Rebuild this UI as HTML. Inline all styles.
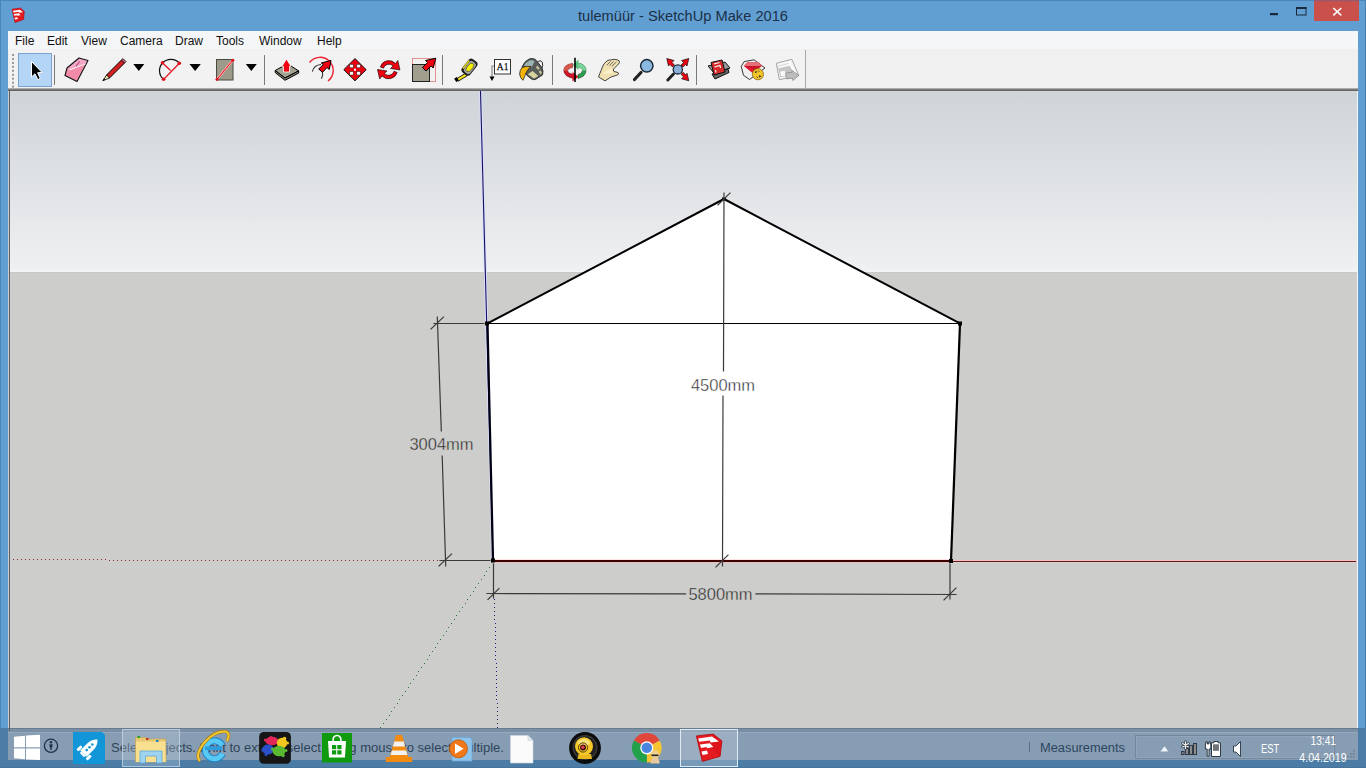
<!DOCTYPE html>
<html><head><meta charset="utf-8">
<style>
*{margin:0;padding:0;box-sizing:border-box}
html,body{width:1366px;height:768px;overflow:hidden}
body{position:relative;background:#619fd2;font-family:"Liberation Sans",sans-serif}
.abs{position:absolute}
#topline{left:0;top:0;width:1366px;height:1px;background:#4a86bd}
#rightline{left:1365px;top:0;width:1px;height:768px;background:#4a80b0}
#leftline{left:0;top:0;width:1px;height:768px;background:#4a86bd}
#title{left:0;top:8px;width:1366px;text-align:center;font-size:14.65px;color:#1c3048;line-height:17px;padding-left:0}
#close{left:1314px;top:0;width:45px;height:21px;background:#c9504b}
#menubar{left:8px;top:31px;width:1350px;height:18px;background:#f5f6f7}
.mi{position:absolute;top:3px;font-size:12px;color:#111;line-height:14px}
#toolbar{left:8px;top:49px;width:1350px;height:39px;background:#f0f0f0}
#tbsep{left:8px;top:88px;width:1350px;height:3px;background:linear-gradient(#adadad 0,#adadad 1px,#7c7c7c 1px,#7c7c7c 2px,#646464 2px)}
#vp{left:8px;top:91px;width:1350px;height:637px;background:linear-gradient(90deg,#c8ccd0 0,#c8ccd0 1px,#5f5f5f 1px,#5f5f5f 2px,transparent 2px,transparent 1348px,#f4f6f8 1348px)}
#vpin{left:10px;top:91px;width:1347px;height:637px}
#sky{left:10px;top:91px;width:1347px;height:181px;background:linear-gradient(#d5d8db 0,#cfd4d8 2px,#eff0f2 178px,#f4f5f5 181px)}
#ground{left:10px;top:272px;width:1347px;height:456px;background:linear-gradient(#c8c8c6 0,#c8c8c6 1px,#cdcdcb 1px)}
#taskbar{left:0;top:728px;width:1366px;height:40px;background:#879db3}
</style></head><body>
<div class="abs" id="topline"></div>
<div class="abs" id="leftline"></div>
<div class="abs" id="rightline"></div>
<div class="abs" id="title">tulemüür - SketchUp Make 2016</div>
<div class="abs" id="close"></div>
<svg class="abs" style="left:0;top:0" width="1366" height="31" viewBox="0 0 1366 31">
 <!-- app icon -->
 <path d="M12 9.2 L20.5 8 L24.3 11.5 L23.6 19.5 L15 22.5 Z" fill="#e41c20" stroke="#b00810" stroke-width="0.6" stroke-linejoin="round"/>
 <g fill="#fff">
  <path d="M13 10.8 L20 9.8 L23 12.3 L19 12.8 L18.5 11.8 L13.5 12.5 Z"/>
  <path d="M13.8 14 L18.8 13.3 L20.5 15.2 L17.3 15.8 L17 15.2 L14.3 15.8 Z"/>
  <path d="M14.6 17.8 L17.3 17.3 L17.8 19 L15 19.5 Z"/>
 </g>
 <!-- min / max / close -->
 <rect x="1314" y="0" width="45" height="1" fill="#9a5868"/><rect x="1314" y="1" width="45" height="1" fill="#b85458"/>
 <rect x="1270" y="13" width="8" height="2.2" fill="#1a2a3c"/>
 <rect x="1296.5" y="7.5" width="9.5" height="7.5" fill="none" stroke="#1a2a3c" stroke-width="1"/>
 <rect x="1296" y="7" width="10.5" height="2" fill="#1a2a3c"/>
 <path d="M1333.3 8 L1341.3 15.3 M1341.3 8 L1333.3 15.3" stroke="#fff" stroke-width="1.6"/>
</svg>
<div class="abs" id="menubar">
 <span class="mi" style="left:7px">File</span>
 <span class="mi" style="left:39px">Edit</span>
 <span class="mi" style="left:73px">View</span>
 <span class="mi" style="left:112px">Camera</span>
 <span class="mi" style="left:167px">Draw</span>
 <span class="mi" style="left:208px">Tools</span>
 <span class="mi" style="left:251px">Window</span>
 <span class="mi" style="left:309px">Help</span>
</div>
<div class="abs" id="toolbar"></div>
<svg class="abs" style="left:0;top:0" width="830" height="92" viewBox="0 0 830 92">
 <!-- toolbar band -->
 <rect x="9" y="50" width="796" height="38" fill="#f2f2f2"/>
 <line x1="805.5" y1="50" x2="805.5" y2="88" stroke="#a8a8a8"/>
 <!-- gripper -->
 <g fill="#9a9a9a"><rect x="12" y="54.0" width="2" height="2"/><rect x="12" y="58.0" width="2" height="2"/><rect x="12" y="61.9" width="2" height="2"/><rect x="12" y="65.8" width="2" height="2"/><rect x="12" y="69.8" width="2" height="2"/><rect x="12" y="73.8" width="2" height="2"/><rect x="12" y="77.7" width="2" height="2"/><rect x="12" y="81.7" width="2" height="2"/><rect x="12" y="85.6" width="2" height="2"/></g>
 <!-- select button -->
 <rect x="18.5" y="53.5" width="33" height="33" fill="#b5d5f7" stroke="#7ba3d2"/>
 <path d="M31.5 61.5 L31.5 77 L35 73.8 L37.8 79.6 L40.3 78.4 L37.6 72.8 L42 72.4 Z" fill="#000" stroke="#fff" stroke-width="1"/>
 <!-- separators -->
 <g stroke="#7a7a7a" stroke-width="1">
  <line x1="54.5" y1="55" x2="54.5" y2="85"/>
  <line x1="264.5" y1="55" x2="264.5" y2="85"/>
  <line x1="442.5" y1="55" x2="442.5" y2="85"/>
  <line x1="552.5" y1="55" x2="552.5" y2="85"/>
  <line x1="696.5" y1="55" x2="696.5" y2="85"/>
 </g>
 <!-- eraser -->
 <path d="M67 68 L79 58 L88 60.5 L85.5 64 L69.5 70 Z" fill="#f4a8c8"/>
 <path d="M65 75.5 L67 68 L69.5 70 L85.5 64 L77 81.5 Z" fill="#f28aa8"/>
 <path d="M79 58 L88 60.5 L77 81.5 L65 75.5 L67 68 Z" fill="none" stroke="#111" stroke-width="1.1" stroke-linejoin="round"/>
 <line x1="69.5" y1="70" x2="85.5" y2="64" stroke="#fff" stroke-width="0.9" opacity="0.9"/>
 <path d="M79.5 61.5 L76 66.5" stroke="#a03060" stroke-width="1.2" stroke-dasharray="1,0.6"/>
 <!-- pencil -->
 <g stroke-linejoin="round">
  <path d="M106.5 75 L121.5 60 L124.6 63 L109.5 78 Z" fill="#d42020" stroke="#000" stroke-width="1"/>
  <path d="M106.5 75 L109.5 78 L102.8 80.8 Z" fill="#f0e6a8" stroke="#000" stroke-width="0.8"/>
  <path d="M102.8 80.8 L104 78.3 L105.3 79.5 Z" fill="#000"/>
  <path d="M121.5 60 L123 58.6 L126 61.6 L124.6 63 Z" fill="#e07090" stroke="#000" stroke-width="0.8"/>
 </g>
 <!-- dropdown triangles -->
 <g fill="#000">
  <path d="M133.3 64 L144.3 64 L138.8 71 Z"/>
  <path d="M189.5 64 L200.8 64 L195.1 71 Z"/>
  <path d="M245.8 64 L256.8 64 L251.3 71 Z"/>
 </g>
 <!-- arc -->
 <path d="M163.6 79.4 A11.35 11.35 0 1 1 179.4 63.2" fill="none" stroke="#111" stroke-width="1.2"/>
 <g stroke="#e0101c" stroke-width="1.3"><line x1="163.6" y1="79.4" x2="179.4" y2="63.2"/><line x1="162.3" y1="62.7" x2="170.6" y2="70.5"/></g>
 <g fill="#e0101c"><circle cx="162.5" cy="62.8" r="1.8"/><circle cx="179.3" cy="63.2" r="1.8"/><circle cx="163.6" cy="79.3" r="1.8"/></g>
 <!-- rectangle -->
 <rect x="216.5" y="59.5" width="16.5" height="20.5" fill="#9c9a88" stroke="#4a4a40" stroke-width="1"/>
 <line x1="216.8" y1="79.6" x2="233" y2="60" stroke="#ffb0b0" stroke-width="2.4"/>
 <line x1="216.8" y1="79.6" x2="233" y2="60" stroke="#e0101c" stroke-width="1"/>
 <circle cx="217" cy="79.3" r="1.5" fill="#e0101c"/><circle cx="232.8" cy="60.2" r="1.5" fill="#e0101c"/>
 <!-- push pull -->
 <g stroke="#000" stroke-width="1" stroke-linejoin="round">
  <path d="M275.2 70.5 L287.5 63.8 L298.7 70.9 L285 78 Z" fill="#a4a292"/>
  <path d="M275.2 70.5 L285 78 L298.7 70.9 L298.7 73 L285 80.3 L275.2 72.6 Z" fill="#7e7c6e"/>
 </g>
 <path d="M286.4 59 L291 66.3 L289.5 66.3 L289.5 72 L283.5 72 L283.5 66.3 L282 66.3 Z" fill="#f00010" stroke="#fff" stroke-width="0.8"/>
 <!-- follow me -->
 <path d="M309.5 62.5 A13.2 13.2 0 1 1 328 81" fill="none" stroke="#f02030" stroke-width="1.4"/>
 <path d="M312.3 71.7 A9.5 9.5 0 0 1 321 64.5 M322 70.5 A9.5 9.5 0 0 1 321.3 78.6" fill="none" stroke="#333" stroke-width="1.1"/>
 <path d="M331 60.4 L329.3 69.5 L327 67.5 L322.5 72.3 L318.7 69 L323.3 64.5 L321.3 63 Z" fill="#f00010" stroke="#000" stroke-width="1" stroke-linejoin="round"/>
 <!-- move -->
 <path d="M355 58.6 L366.2 69.7 L355 80.8 L343.8 69.7 Z" fill="#ee0010" stroke="#111" stroke-width="1" stroke-linejoin="round"/>
 <g fill="#fff" stroke="#222" stroke-width="0.5">
  <rect x="349.8" y="64.4" width="3.4" height="3.4"/><rect x="356.8" y="64.4" width="3.4" height="3.4"/>
  <rect x="349.8" y="71.6" width="3.4" height="3.4"/><rect x="356.8" y="71.6" width="3.4" height="3.4"/>
 </g>
 <rect x="354" y="68.7" width="2" height="2" fill="#fff"/>
 <!-- rotate -->
 <g fill="#ee0010" stroke="#000" stroke-width="0.6" stroke-linejoin="round">
  <path d="M380.3 67 A9 9 0 0 1 395.5 63.5 L397.8 60.5 L400 70 L390.5 68.5 L393 66 A5.6 5.6 0 0 0 383.6 68.2 Z"/>
  <path d="M397.2 72.4 A9 9 0 0 1 382 76 L379.7 79 L377.5 69.5 L387 71 L384.5 73.5 A5.6 5.6 0 0 0 393.9 71.3 Z"/>
 </g>
 <!-- scale -->
 <rect x="412.5" y="58.5" width="23" height="23" fill="none" stroke="#e89090" stroke-width="1"/>
 <rect x="412.5" y="64.5" width="17" height="17" fill="#a09e8c" stroke="#222" stroke-width="1"/>
 <path d="M435.8 58.2 L433.2 68 L431.2 66 L426 71 L422.4 67.5 L427.6 62.5 L425.5 60.5 Z" fill="#f00010" stroke="#000" stroke-width="1" stroke-linejoin="round"/>
 <!-- tape measure -->
 <path d="M456.5 78.8 L465.5 73.3 L467.2 75.8 L458.2 81.2 Z" fill="#f0e020" stroke="#111" stroke-width="0.9"/>
 <rect x="455" y="77.6" width="3" height="4" fill="#000" transform="rotate(-32 456.5 79.6)"/>
 <g transform="rotate(38 469.3 67)">
  <rect x="464.3" y="58.5" width="10.5" height="17" rx="3.5" fill="#1a1a1a"/>
  <rect x="466.3" y="60.3" width="7.5" height="13.5" rx="2.5" fill="#a8a8a8"/>
  <rect x="464.5" y="62" width="1.6" height="10" fill="#e0d020"/>
  <ellipse cx="470" cy="67" rx="2.6" ry="5" fill="#f4f000" stroke="#222" stroke-width="0.5"/>
 </g>
 <!-- text tool -->
 <rect x="494.5" y="59.5" width="16" height="14.5" fill="#fff" stroke="#333" stroke-width="1"/>
 <text x="502.6" y="70.3" font-family="Liberation Serif" font-size="9.5" text-anchor="middle" fill="#111" stroke="#111" stroke-width="0.25">A1</text>
 <path d="M494 66 L492 66 L492 77" fill="none" stroke="#8a8a8a" stroke-width="1.2"/>
 <path d="M489.5 76.5 L494.5 76.5 L492 81 Z" fill="#000"/>
 <!-- paint bucket -->
 <path d="M537 62.5 Q540.5 59.3 542.3 62.3 Q543.5 65.5 541.5 69" fill="none" stroke="#222" stroke-width="1"/>
 <path d="M522 67 Q524 61.5 529.5 58.8 Q533 58 535.5 59.5 L541.5 67 Q544 71 542.5 75 L535.5 79.5 Q533.5 80 531.5 79 L527 75.5 Z" fill="#585c5a" stroke="#2a2e2c" stroke-width="0.9" stroke-linejoin="round"/>
 <path d="M524 66 Q526 62 530 60.3 Q533.5 59.8 534.5 61.5 L532 66.5 Q527.5 66.8 524 66 Z" fill="#9cb4b4"/>
 <path d="M527.8 74.3 L532.6 71 L538.3 76 L534 78.5 Z" fill="#d8d4a2"/>
 <path d="M537 65.5 L539.8 68.3 L538.3 70 L536 67.5 Z M540 70 L542 72.5 L540.8 74.5 L538.8 72 Z" fill="#c8c496"/>
 <path d="M522 67.5 Q527 65.8 531 66.5 Q527.5 69 526 73 Q524.5 77 523 80.3 Q520 78 519.6 74 Q519.8 70 522 67.5 Z" fill="#f4b408" stroke="#222" stroke-width="0.8" stroke-linejoin="round"/>
 <!-- orbit -->
 <path d="M572.5 63.5 Q563.8 64.5 563.8 70.5 Q564 76.5 573.5 78.5 L573.5 74.5 Q567.8 73.5 567.5 70.8 Q568 67.8 572.5 67.5 Z" fill="#d41424" stroke="#3a1010" stroke-width="0.5"/>
 <path d="M572.5 63.5 Q563.8 64.5 563.8 70.5 L567.5 70.8 Q568 67.8 572.5 67.5 Z" fill="#d8584c"/>
 <path d="M572.5 72 L578.5 76.8 L572.5 81.5 Z" fill="#d41424"/>
 <path d="M577.5 63 Q586 64 586 70.5 Q586 76.5 578 78.5 L578 74.5 Q582.3 73.5 582.5 70.5 Q582.3 67.5 577.5 67 Z" fill="#2e9e4e" stroke="#103a1a" stroke-width="0.5"/>
 <path d="M577.5 63 Q586 64 586 70.5 L582.5 70.5 Q582.3 67.5 577.5 67 Z" fill="#78d498"/>
 <path d="M578.5 59.5 L572.5 65 L578.5 70 Z" fill="#5cc080"/>
 <line x1="575" y1="57.8" x2="575" y2="81.9" stroke="#000" stroke-width="1.6"/>
 <!-- pan hand -->
 <path d="M598.5 77 L602 68 Q603.5 63 607 61 Q609 59.5 611 60 Q613 59 615 59.5 Q617 59.2 619.3 61 Q620 62.5 618.5 64 L614 68.5 Q612.5 70 614 71.5 L618 72.5 Q619.5 74 617.5 75 L611 77 L605 80.8 Z" fill="#f2e2b2" stroke="#333" stroke-width="0.9" stroke-linejoin="round"/>
 <path d="M603 74 Q606 70 611 68.5 Q613 70 612.5 73 Z" fill="#f8f0c8"/>
 <path d="M606.8 65.3 L610.6 61.4 M609.4 65.8 L613.6 61.4 M611.8 66.4 L616.4 61.9" fill="none" stroke="#444" stroke-width="0.8"/>
 <!-- zoom -->
 <line x1="634.5" y1="79.5" x2="641" y2="72.5" stroke="#222" stroke-width="3.2" stroke-linecap="round"/>
 <circle cx="646.8" cy="65.8" r="6.2" fill="#8bb8e0" stroke="#1d2a36" stroke-width="1.5"/>
 <!-- zoom extents -->
 <line x1="667.8" y1="80" x2="673.5" y2="74" stroke="#222" stroke-width="3" stroke-linecap="round"/>
 <circle cx="677.8" cy="69.4" r="4.6" fill="#8bb0d8" stroke="#1d2a36" stroke-width="1.3"/>
 <g fill="#ee0010" stroke="#111" stroke-width="0.7" stroke-linejoin="round">
  <path d="M666.8 58.5 L674 60.5 L672 62.5 L674.5 65 L672.5 67 L670 64.5 L668.5 66 Z"/>
  <path d="M688.8 58.5 L681.6 60.5 L683.6 62.5 L681 65 L683 67 L685.6 64.5 L687 66 Z"/>
  <path d="M688.8 80.8 L681.6 78.8 L683.6 76.8 L681 74.3 L683 72.3 L685.6 74.8 L687 73.3 Z"/>
 </g>
 <!-- warehouse -->
 <g stroke="#111" stroke-width="1" stroke-linejoin="round">
  <path d="M708 66 L725 62 L730 68 L714 73 Z" fill="#999"/>
  <path d="M712 74 L728 69 L729 72.5 L715 79 Z" fill="#666"/>
  <path d="M711 62.5 L722 60 L725 72 L714 75 Z" fill="#d42a2a"/>
 </g>
 <path d="M714 64 L719.5 62.5 M714.5 67 L720 65.5 L720.5 68 M715.5 70 L716 72.5" fill="none" stroke="#fff" stroke-width="1.1"/>
 <!-- ruby -->
 <path d="M741.2 66.4 L744.2 61.6 L754 59.8 L765 68 L749.5 79.5 L743.5 75.3 Z" fill="#f0f0f0" stroke="#222" stroke-width="0.9" stroke-linejoin="round"/>
 <path d="M743.8 66 L747.5 62.3 L758 62 L762 66 L752.5 72.8 Z" fill="#c81428"/>
 <path d="M747.5 62.3 L758 62 L762 66 L743.8 66 Z" fill="#e87078"/>
 <path d="M746 67.5 L752.5 72.8 L756 70.3 L750 67.3 Z" fill="#e01830"/>
 <circle cx="757.9" cy="74.2" r="5.6" fill="#f2c42a" stroke="#7a5a10" stroke-width="0.7"/>
 <g fill="#222"><path d="M754.5 72 L757 71 L756.3 73.3 Z"/><path d="M761.3 76.4 L758.8 77.4 L759.5 75.1 Z"/><path d="M758 70.5 L759.5 72 M756.5 76.5 L758 78" stroke="#222" stroke-width="0.7"/></g>
 <!-- export gray -->
 <g stroke-linejoin="round">
  <path d="M776.3 63.3 L791.8 59.3 L798.8 75.5 L779.4 79.7 Z" fill="#f6f6f6" stroke="#a4a4a4" stroke-width="1"/>
  <path d="M777.5 66.5 L790.5 63 L791.6 65.3 L778.3 68.8 Z" fill="#fff" stroke="#b8b8b8" stroke-width="0.6"/>
  <path d="M778.3 68.8 L790 66 L794 73.5 L780.5 77.5 Z" fill="#c4c4c4"/>
  <path d="M779.5 71.5 L785 70 L786.5 75.5 L781 77 Z" fill="#fafafa" stroke="#b0b0b0" stroke-width="0.5"/>
  <path d="M790 61.5 L795.5 72.5 L793.5 73 L788.5 62.5 Z" fill="#fff"/>
  <path d="M785.8 73 L792.2 72.3 L791.8 70.2 L798.8 75.5 L792.8 80.5 L792.6 78.2 L786.3 78.8 Z" fill="#bdbdbd" stroke="#8e8e8e" stroke-width="0.8"/>
 </g>
 </svg>
<div class="abs" id="tbsep"></div>
<div class="abs" id="vp"></div>
<div class="abs" id="sky"></div>
<div class="abs" id="ground"></div>
<svg class="abs" style="left:0;top:0" width="1366" height="768" viewBox="0 0 1366 768">
 <defs><clipPath id="vpc"><rect x="10" y="91" width="1347" height="637"/></clipPath></defs>
 <g clip-path="url(#vpc)" shape-rendering="crispEdges">
  <polygon points="724,199 960,323.5 951,561 493,560.5 487,323.5" fill="#fff" shape-rendering="auto"/>
  <!-- axes -->
  <line x1="480.5" y1="91" x2="493" y2="560" stroke="#dcdcff" stroke-width="3" shape-rendering="auto"/>
  <line x1="480.5" y1="91" x2="493" y2="560" stroke="#14145e" stroke-width="1.1" shape-rendering="auto"/>
  <line x1="493" y1="560.5" x2="1356" y2="560.5" stroke="#ffc0c0" stroke-width="1"/>
  <line x1="493" y1="562.5" x2="1356" y2="562.5" stroke="#dcd0d0" stroke-width="1"/>
  <line x1="493" y1="561.5" x2="1356" y2="561.5" stroke="#601818" stroke-width="1"/>
  <g fill="#8a2a2a"><rect x="13" y="559" width="1" height="1"/><rect x="17" y="559" width="1" height="1"/><rect x="21" y="559" width="1" height="1"/><rect x="25" y="559" width="1" height="1"/><rect x="29" y="559" width="1" height="1"/><rect x="33" y="559" width="1" height="1"/><rect x="37" y="559" width="1" height="1"/><rect x="41" y="559" width="1" height="1"/><rect x="45" y="559" width="1" height="1"/><rect x="49" y="559" width="1" height="1"/><rect x="53" y="559" width="1" height="1"/><rect x="57" y="559" width="1" height="1"/><rect x="61" y="559" width="1" height="1"/><rect x="65" y="559" width="1" height="1"/><rect x="69" y="559" width="1" height="1"/><rect x="73" y="559" width="1" height="1"/><rect x="77" y="559" width="1" height="1"/><rect x="81" y="559" width="1" height="1"/><rect x="85" y="559" width="1" height="1"/><rect x="89" y="559" width="1" height="1"/><rect x="93" y="559" width="1" height="1"/><rect x="97" y="559" width="1" height="1"/><rect x="101" y="559" width="1" height="1"/><rect x="105" y="559" width="1" height="1"/><rect x="109" y="560" width="1" height="1"/><rect x="113" y="560" width="1" height="1"/><rect x="117" y="560" width="1" height="1"/><rect x="121" y="560" width="1" height="1"/><rect x="125" y="560" width="1" height="1"/><rect x="129" y="560" width="1" height="1"/><rect x="133" y="560" width="1" height="1"/><rect x="137" y="560" width="1" height="1"/><rect x="141" y="560" width="1" height="1"/><rect x="145" y="560" width="1" height="1"/><rect x="149" y="560" width="1" height="1"/><rect x="153" y="560" width="1" height="1"/><rect x="157" y="560" width="1" height="1"/><rect x="161" y="560" width="1" height="1"/><rect x="165" y="560" width="1" height="1"/><rect x="169" y="560" width="1" height="1"/><rect x="173" y="560" width="1" height="1"/><rect x="177" y="560" width="1" height="1"/><rect x="181" y="560" width="1" height="1"/><rect x="185" y="560" width="1" height="1"/><rect x="189" y="560" width="1" height="1"/><rect x="193" y="560" width="1" height="1"/><rect x="197" y="560" width="1" height="1"/><rect x="201" y="560" width="1" height="1"/><rect x="205" y="560" width="1" height="1"/><rect x="209" y="560" width="1" height="1"/><rect x="213" y="560" width="1" height="1"/><rect x="217" y="560" width="1" height="1"/><rect x="221" y="560" width="1" height="1"/><rect x="225" y="560" width="1" height="1"/><rect x="229" y="560" width="1" height="1"/><rect x="233" y="560" width="1" height="1"/><rect x="237" y="560" width="1" height="1"/><rect x="241" y="560" width="1" height="1"/><rect x="245" y="560" width="1" height="1"/><rect x="249" y="560" width="1" height="1"/><rect x="253" y="560" width="1" height="1"/><rect x="257" y="560" width="1" height="1"/><rect x="261" y="560" width="1" height="1"/><rect x="265" y="560" width="1" height="1"/><rect x="269" y="560" width="1" height="1"/><rect x="273" y="560" width="1" height="1"/><rect x="277" y="560" width="1" height="1"/><rect x="281" y="560" width="1" height="1"/><rect x="285" y="560" width="1" height="1"/><rect x="289" y="560" width="1" height="1"/><rect x="293" y="560" width="1" height="1"/><rect x="297" y="560" width="1" height="1"/><rect x="301" y="560" width="1" height="1"/><rect x="305" y="560" width="1" height="1"/><rect x="309" y="560" width="1" height="1"/><rect x="313" y="560" width="1" height="1"/><rect x="317" y="560" width="1" height="1"/><rect x="321" y="560" width="1" height="1"/><rect x="325" y="560" width="1" height="1"/><rect x="329" y="560" width="1" height="1"/><rect x="333" y="560" width="1" height="1"/><rect x="337" y="560" width="1" height="1"/><rect x="341" y="560" width="1" height="1"/><rect x="345" y="560" width="1" height="1"/><rect x="349" y="560" width="1" height="1"/><rect x="353" y="560" width="1" height="1"/><rect x="357" y="560" width="1" height="1"/><rect x="361" y="560" width="1" height="1"/><rect x="365" y="560" width="1" height="1"/><rect x="369" y="560" width="1" height="1"/><rect x="373" y="560" width="1" height="1"/><rect x="377" y="560" width="1" height="1"/><rect x="381" y="560" width="1" height="1"/><rect x="385" y="560" width="1" height="1"/><rect x="389" y="560" width="1" height="1"/><rect x="393" y="560" width="1" height="1"/><rect x="397" y="560" width="1" height="1"/><rect x="401" y="560" width="1" height="1"/><rect x="405" y="560" width="1" height="1"/><rect x="409" y="560" width="1" height="1"/><rect x="413" y="560" width="1" height="1"/><rect x="417" y="560" width="1" height="1"/><rect x="421" y="560" width="1" height="1"/><rect x="425" y="560" width="1" height="1"/><rect x="429" y="560" width="1" height="1"/><rect x="433" y="560" width="1" height="1"/><rect x="437" y="560" width="1" height="1"/></g>
  <g fill="#2f7a2f"><rect x="489" y="567" width="1" height="1"/><rect x="486" y="571" width="1" height="1"/><rect x="484" y="575" width="1" height="1"/><rect x="481" y="579" width="1" height="1"/><rect x="478" y="583" width="1" height="1"/><rect x="475" y="587" width="1" height="1"/><rect x="473" y="591" width="1" height="1"/><rect x="470" y="595" width="1" height="1"/><rect x="467" y="599" width="1" height="1"/><rect x="465" y="603" width="1" height="1"/><rect x="462" y="607" width="1" height="1"/><rect x="459" y="611" width="1" height="1"/><rect x="456" y="615" width="1" height="1"/><rect x="454" y="619" width="1" height="1"/><rect x="451" y="623" width="1" height="1"/><rect x="448" y="627" width="1" height="1"/><rect x="446" y="631" width="1" height="1"/><rect x="443" y="635" width="1" height="1"/><rect x="440" y="639" width="1" height="1"/><rect x="437" y="643" width="1" height="1"/><rect x="435" y="647" width="1" height="1"/><rect x="432" y="651" width="1" height="1"/><rect x="429" y="655" width="1" height="1"/><rect x="427" y="659" width="1" height="1"/><rect x="424" y="663" width="1" height="1"/><rect x="421" y="667" width="1" height="1"/><rect x="418" y="671" width="1" height="1"/><rect x="416" y="675" width="1" height="1"/><rect x="413" y="679" width="1" height="1"/><rect x="410" y="683" width="1" height="1"/><rect x="408" y="687" width="1" height="1"/><rect x="405" y="691" width="1" height="1"/><rect x="402" y="695" width="1" height="1"/><rect x="399" y="699" width="1" height="1"/><rect x="397" y="703" width="1" height="1"/><rect x="394" y="707" width="1" height="1"/><rect x="391" y="711" width="1" height="1"/><rect x="389" y="715" width="1" height="1"/><rect x="386" y="719" width="1" height="1"/><rect x="383" y="723" width="1" height="1"/><rect x="380" y="727" width="1" height="1"/></g>
  <g fill="#1e1e80"><rect x="494" y="599" width="1" height="1"/><rect x="494" y="603" width="1" height="1"/><rect x="494" y="607" width="1" height="1"/><rect x="494" y="611" width="1" height="1"/><rect x="494" y="615" width="1" height="1"/><rect x="494" y="619" width="1" height="1"/><rect x="495" y="623" width="1" height="1"/><rect x="495" y="627" width="1" height="1"/><rect x="495" y="631" width="1" height="1"/><rect x="495" y="635" width="1" height="1"/><rect x="495" y="639" width="1" height="1"/><rect x="495" y="643" width="1" height="1"/><rect x="495" y="647" width="1" height="1"/><rect x="495" y="651" width="1" height="1"/><rect x="495" y="655" width="1" height="1"/><rect x="495" y="659" width="1" height="1"/><rect x="496" y="663" width="1" height="1"/><rect x="496" y="667" width="1" height="1"/><rect x="496" y="671" width="1" height="1"/><rect x="496" y="675" width="1" height="1"/><rect x="496" y="679" width="1" height="1"/><rect x="496" y="683" width="1" height="1"/><rect x="496" y="687" width="1" height="1"/><rect x="496" y="691" width="1" height="1"/><rect x="496" y="695" width="1" height="1"/><rect x="496" y="699" width="1" height="1"/><rect x="497" y="703" width="1" height="1"/><rect x="497" y="707" width="1" height="1"/><rect x="497" y="711" width="1" height="1"/><rect x="497" y="715" width="1" height="1"/><rect x="497" y="719" width="1" height="1"/><rect x="497" y="723" width="1" height="1"/><rect x="497" y="727" width="1" height="1"/></g>
 </g>
 <g clip-path="url(#vpc)" fill="none" stroke-linecap="square" shape-rendering="auto">
  <!-- edges -->
  <line x1="487.5" y1="323.5" x2="960" y2="323.5" stroke="#000" stroke-width="1.2"/>
  <polyline points="487.5,323.5 724,199 960,323.5" stroke="#000" stroke-width="2"/>
  <line x1="487.5" y1="323.5" x2="493" y2="561" stroke="#000010" stroke-width="2.2"/>
  <line x1="960" y1="323.5" x2="951" y2="561" stroke="#000" stroke-width="2.2"/>
  <line x1="493" y1="561" x2="951" y2="561" stroke="#ff9090" stroke-width="3" opacity="0.5"/>
  <line x1="493" y1="561" x2="951" y2="561" stroke="#3c0000" stroke-width="2"/>
  <g fill="#000"><rect x="485" y="321.5" width="4" height="4"/><rect x="958" y="321.5" width="4" height="4"/><rect x="491" y="558.5" width="4" height="4"/><rect x="949" y="559" width="4" height="4"/><rect x="722" y="197.5" width="4" height="3"/></g>
  <!-- dims -->
  <g stroke="#3a3a3a" stroke-width="1.2">
   <line x1="434" y1="323.5" x2="484" y2="323.5"/>
   <line x1="437.3" y1="317" x2="441.3" y2="431"/>
   <line x1="442.2" y1="456" x2="445.7" y2="566"/>
   <line x1="431" y1="329" x2="443.5" y2="317"/>
   <line x1="439" y1="566" x2="451.5" y2="554"/>
   <line x1="440" y1="560.5" x2="490" y2="560.5"/>
   <line x1="724" y1="193" x2="723.5" y2="371"/>
   <line x1="723" y1="396" x2="722.5" y2="566"/>
   <line x1="718" y1="205" x2="730" y2="193"/>
   <line x1="716" y1="567" x2="728" y2="555"/>
   <line x1="493.5" y1="564" x2="493.5" y2="598"/>
   <line x1="950" y1="564" x2="950" y2="599"/>
   <line x1="487" y1="593.5" x2="685.5" y2="593.8"/>
   <line x1="756" y1="593.8" x2="956" y2="594.5"/>
   <line x1="488" y1="599.5" x2="499" y2="588.5"/>
   <line x1="944" y1="600" x2="956" y2="588"/>
  </g>
 </g>
 <g font-family="Liberation Sans" font-size="16.5" fill="#222" text-anchor="middle" stroke-width="0.4">
  <text x="441.5" y="450" stroke="#cdcdcb">3004mm</text>
  <text x="723" y="391" stroke="#fff">4500mm</text>
  <text x="720.5" y="600" stroke="#cdcdcb">5800mm</text>
 </g>
</svg>
<svg class="abs" style="left:0;top:728px" width="1366" height="40" viewBox="0 728 1366 40">
 <rect x="0" y="728" width="1366" height="40" fill="#4b7ca6"/>
 <rect x="8" y="728" width="1350" height="4" fill="#7a8fa4"/>
 <rect x="8" y="728" width="1350" height="1" fill="#687c8f"/>
 <rect x="8" y="732" width="1350" height="28" fill="#879db3"/>
 <rect x="8" y="732" width="1350" height="1" fill="#93a9bf"/>
 <rect x="0" y="767" width="1366" height="1" fill="#44739b"/>
 <!-- status separator + measurements box -->
 <rect x="1029" y="742" width="1" height="10" fill="#5a7088"/>
 <rect x="1135.5" y="735.5" width="199" height="23" fill="none" stroke="#74889c" stroke-width="1"/>
 <rect x="1136.5" y="736.5" width="197" height="21" fill="none" stroke="#90a5b9" stroke-width="1"/>
 <!-- resize grip -->
 <g fill="#6a7c8e"><rect x="1353" y="750" width="1.5" height="1.5"/><rect x="1350" y="753" width="1.5" height="1.5"/><rect x="1353" y="753" width="1.5" height="1.5"/><rect x="1347" y="756" width="1.5" height="1.5"/><rect x="1350" y="756" width="1.5" height="1.5"/><rect x="1353" y="756" width="1.5" height="1.5"/></g>
 <!-- viewport frame line continuing -->
 <rect x="9" y="728" width="1" height="3" fill="#555e66"/>
 <!-- start logo -->
 <g fill="#fff">
  <path d="M14 736.8 L25 735.8 L25 747.3 L14 747.3 Z"/>
  <path d="M26 735.6 L40 734.8 L40 747.3 L26 747.3 Z"/>
  <path d="M14 748.5 L25 748.5 L25 759.3 L14 758.3 Z"/>
  <path d="M26 748.5 L40 748.5 L40 760 L26 759.5 Z"/>
 </g>
 <!-- info icon -->
 <circle cx="51" cy="745.8" r="6.6" fill="none" stroke="#1f3448" stroke-width="1.3"/>
 <circle cx="51" cy="742.3" r="1.3" fill="#1f3448"/>
 <path d="M49.3 744.3 L52.7 744.3 L52.2 747.5 L51.7 747.5 L51.7 750 L50.3 750 L50.3 747.5 L49.8 747.5 Z" fill="#1f3448"/>
 <!-- rocket -->
 <path d="M73 732 L102 732 L105 735 L105 764 L73 764 Z" fill="#1296d8"/>
 <g fill="#fff" transform="rotate(45 89 748)">
  <path d="M89 736 Q93.5 740 93.5 746 L93.5 756 L84.5 756 L84.5 746 Q84.5 740 89 736 Z"/>
  <rect x="81" y="752" width="3" height="6" rx="1"/><rect x="94" y="752" width="3" height="6" rx="1"/>
  <rect x="86" y="756" width="6" height="2"/>
 </g>
 <g fill="#1296d8"><circle cx="92.3" cy="744.5" r="1.3"/><circle cx="89.5" cy="747.3" r="1.3"/><circle cx="86.7" cy="750.1" r="1.3"/></g>
 <!-- status text -->
 <text x="111" y="752" font-family="Liberation Sans" font-size="12.5" fill="#2f4358" textLength="393" lengthAdjust="spacingAndGlyphs">Select objects. Shift to extend select. Drag mouse to select multiple.</text>
 <text x="1040" y="752" font-family="Liberation Sans" font-size="12.5" fill="#2c4560" textLength="85" lengthAdjust="spacingAndGlyphs">Measurements</text>
 <!-- explorer highlight -->
 <rect x="122.5" y="729.5" width="57" height="37" fill="#b8c8d8" fill-opacity="0.35" stroke="#c8d6e4" stroke-opacity="0.8"/>
 <!-- folder -->
 <path d="M135.5 737.5 L146 737.5 L148 739 L165.5 739 L166 762 L135.5 762 Z" fill="#e8c870" stroke="#c9a450" stroke-width="0.6"/>
 <path d="M136 741.5 L165.5 741.5 L165.5 762 L136 762 Z" fill="#f8e090"/>
 <rect x="137.5" y="736" width="2.5" height="2" fill="#20a020"/><rect x="146" y="738" width="2.5" height="2" fill="#c03020"/><rect x="156" y="740" width="2.5" height="2" fill="#2080d0"/>
 <path d="M140 751 L162 751 L162 763 L156.5 763 L156.5 756 L145.5 756 L145.5 763 L140 763 Z" fill="#9fd4f0" stroke="#5aa8d8" stroke-width="0.8"/>
 <!-- IE -->
 <path d="M222.5 753.5 A9 9 0 1 1 222.2 745.5" fill="none" stroke="#1a80c8" stroke-width="6.8"/>
 <path d="M222.5 753.5 A9 9 0 1 1 222.2 745.5" fill="none" stroke="#58c8f4" stroke-width="5"/>
 <rect x="205" y="746.5" width="17.5" height="3.6" fill="#2c9ee0"/>
 <path d="M200 761 Q194.5 755.5 204 743 Q214.5 730.5 225.5 731.5 Q231 733.5 227 741" fill="none" stroke="#a07810" stroke-width="3.2"/>
 <path d="M200 761 Q194.5 755.5 204 743 Q214.5 730.5 225.5 731.5 Q231 733.5 227 741" fill="none" stroke="#f4c830" stroke-width="2"/>
 <!-- puzzle -->
 <rect x="259.2" y="731.9" width="31.7" height="31.8" rx="4.5" fill="#161616"/>
 <g>
  <ellipse cx="272" cy="741" rx="6.5" ry="4.3" fill="#e22858"/>
  <circle cx="271" cy="737.8" r="1.8" fill="#e22858"/><circle cx="265.5" cy="740" r="1.6" fill="#e22858"/>
  <ellipse cx="282" cy="743" rx="5.2" ry="5.2" fill="#f2c820"/>
  <circle cx="284.5" cy="738.5" r="1.8" fill="#f2c820"/><circle cx="287.5" cy="743" r="1.6" fill="#f2c820"/>
  <ellipse cx="268" cy="749.5" rx="5.8" ry="5" fill="#2a50c8"/>
  <circle cx="263" cy="750" r="1.8" fill="#2a50c8"/><circle cx="266" cy="754.5" r="1.5" fill="#2a50c8"/>
  <ellipse cx="279" cy="751" rx="6.5" ry="5.2" fill="#58b830"/>
  <circle cx="283" cy="755.5" r="1.8" fill="#58b830"/><circle cx="272.5" cy="749" r="1.6" fill="#58b830"/><circle cx="286" cy="750.5" r="1.5" fill="#58b830"/>
 </g>
 <!-- store -->
 <rect x="322" y="733" width="30" height="29.5" fill="#109a10"/>
 <path d="M328 741 L346 741 L345 757.5 L329 757.5 Z" fill="#fff"/>
 <path d="M333 741 Q333 735.5 337 735.5 Q341 735.5 341 741" fill="none" stroke="#fff" stroke-width="1.6"/>
 <g fill="#109a10"><rect x="332" y="745" width="4.2" height="4.2"/><rect x="337.3" y="745" width="4.2" height="4.2"/><rect x="332" y="750.3" width="4.2" height="4.2"/><rect x="337.3" y="750.3" width="4.2" height="4.2"/></g>
 <!-- VLC -->
 <path d="M386 757 L412 757 L412.3 762 L385.6 762 Z" fill="#f08a10"/>
 <path d="M396 735 L402 735 L408.5 758 L389.5 758 Z" fill="#f48c10"/>
 <path d="M394.3 741.5 L403.7 741.5 L405 746.5 L393 746.5 Z" fill="#f2f2f2"/>
 <path d="M392 750.5 L406 750.5 L407.3 755 L390.7 755 Z" fill="#f2f2f2"/>
 <!-- media player -->
 <path d="M452 737.5 L470 737.5 L472 740 L472 761 L452 761 Z" fill="#8ec4ec" stroke="#6aa8d8" stroke-width="0.8"/>
 <circle cx="458.5" cy="748.8" r="9" fill="#f07818" stroke="#c05808" stroke-width="0.8"/>
 <path d="M455 743.5 L463.5 748.8 L455 754 Z" fill="#fff"/>
 <!-- blank doc -->
 <path d="M510.5 735.5 L528 735.5 L533 740.5 L533 763 L510.5 763 Z" fill="#fbfbfb" stroke="#d0d8e0" stroke-width="0.6"/>
 <path d="M528 735.5 L528 740.5 L533 740.5" fill="#e0e4e8" stroke="#c8d0d8" stroke-width="0.6"/>
 <!-- webcam -->
 <circle cx="585" cy="748" r="15.9" fill="#0c0c0c"/>
 <circle cx="585" cy="747.5" r="12.5" fill="#3a3a3a"/>
 <circle cx="585" cy="747.5" r="11" fill="#202020"/>
 <path d="M578.5 754 L591 754 L592 759 L577.5 759 Z" fill="#e8b820"/>
 <circle cx="584" cy="746.3" r="9" fill="#f4c828"/>
 <ellipse cx="584" cy="742.5" rx="6" ry="3.5" fill="#fae890" opacity="0.8"/>
 <circle cx="583" cy="747.5" r="4.6" fill="none" stroke="#5a3a00" stroke-width="1"/>
 <circle cx="583" cy="747.5" r="3" fill="#3a0a0a"/>
 <circle cx="582.8" cy="747.3" r="1.8" fill="#e04050"/>
 <!-- chrome -->
 <path d="M646.80 747.80 L633.98 740.40 A14.8 14.8 0 0 1 659.62 740.40 Z" fill="#e0463a"/><path d="M646.80 747.80 L659.62 740.40 A14.8 14.8 0 0 1 646.80 762.60 Z" fill="#f6c432"/><path d="M646.80 747.80 L646.80 762.60 A14.8 14.8 0 0 1 633.98 740.40 Z" fill="#22a04a"/>
 <circle cx="646.8" cy="747.8" r="6.6" fill="#fff"/>
 <circle cx="646.8" cy="747.8" r="5.3" fill="#4a86e0"/>
 <circle cx="655" cy="754.5" r="4.2" fill="#f0d090"/>
 <path d="M650.5 763.5 Q651 757 655.5 757.5 Q660 758 659.5 763.5 Z" fill="#e8c8a0"/>
 <rect x="651.5" y="754.5" width="7" height="1.6" fill="#222"/>
 <!-- sketchup highlight -->
 <rect x="680.5" y="729.5" width="57" height="37" fill="#b8c8d8" fill-opacity="0.4" stroke="#e0eaf4" stroke-width="1"/>
 <path d="M696.4 735.9 L713.2 734.1 L721.9 740.9 L720.1 756.4 L702.3 761.4 Z" fill="#e41c20" stroke="#b00810" stroke-width="0.8" stroke-linejoin="round"/>
 <path d="M713.2 734.1 L721.9 740.9 L720.1 756.4 L711 748 Z" fill="#d81018" opacity="0.6"/>
 <g fill="#fff">
  <path d="M698.2 738.4 L712 736.6 L719 741.6 L710.8 742.6 L709.6 740.6 L699.2 741.8 Z"/>
  <path d="M700 744.4 L709.8 743.2 L713.4 747 L707.2 748.2 L706.6 747 L701 748 Z"/>
  <path d="M701.5 751.6 L707 750.6 L708 754 L702.5 755 Z"/>
 </g>
 <!-- tray -->
 <path d="M1160.6 751.5 L1164.5 746.3 L1168.3 751.5 Z" fill="#f4f8fc" stroke="#b0bccc" stroke-width="0.5"/>
 <g fill="#8c8c8c" stroke="#2e3a48" stroke-width="1">
  <rect x="1181.5" y="751.5" width="2.5" height="3"/><rect x="1185.5" y="748.5" width="3" height="6"/><rect x="1189.5" y="745.5" width="3" height="9"/><rect x="1193.5" y="743.5" width="3" height="11"/>
 </g>
 <g stroke="#2e3a48" stroke-width="2.6" stroke-linecap="round"><path d="M1185.5 741.8 L1185.5 748.6 M1182.6 743.5 L1188.4 746.9 M1188.4 743.5 L1182.6 746.9"/></g>
 <g stroke="#f4f4f4" stroke-width="1.2" stroke-linecap="round"><path d="M1185.5 741.8 L1185.5 748.6 M1182.6 743.5 L1188.4 746.9 M1188.4 743.5 L1182.6 746.9"/></g>
 <g stroke="#1e2a36" stroke-width="0.9" fill="#fff">
  <path d="M1205.8 741.8 L1207.3 741.8 L1207.3 744 L1208.8 744 L1208.8 741.8 L1210.3 741.8 L1210.3 744 L1210.8 744 L1210.8 749 L1209 749 L1209 756.2 L1207.2 756.2 L1207.2 749 L1205.4 749 L1205.4 744 L1205.8 744 Z"/>
  <path d="M1214 741.5 L1218 741.5 L1218 742.8 L1220.5 742.8 L1220.5 756.5 L1211.5 756.5 L1211.5 742.8 L1214 742.8 Z"/>
 </g>
 <rect x="1213" y="744.3" width="6" height="6.5" fill="#707478"/>
 <path d="M1233.5 746 L1236 746 L1240.5 741.5 L1240.5 756.5 L1236 752 L1233.5 752 Z" fill="#fff" stroke="#2a3642" stroke-width="0.9"/>
 <g font-family="Liberation Sans" fill="#fff" font-size="12">
  <text x="1261" y="752.5" textLength="18.2" lengthAdjust="spacingAndGlyphs">EST</text>
  <text x="1310.5" y="744.8" textLength="25.5" lengthAdjust="spacingAndGlyphs">13:41</text>
  <text x="1299.3" y="762" textLength="47.3" lengthAdjust="spacingAndGlyphs">4.04.2019</text>
 </g>
</svg>
</body></html>
